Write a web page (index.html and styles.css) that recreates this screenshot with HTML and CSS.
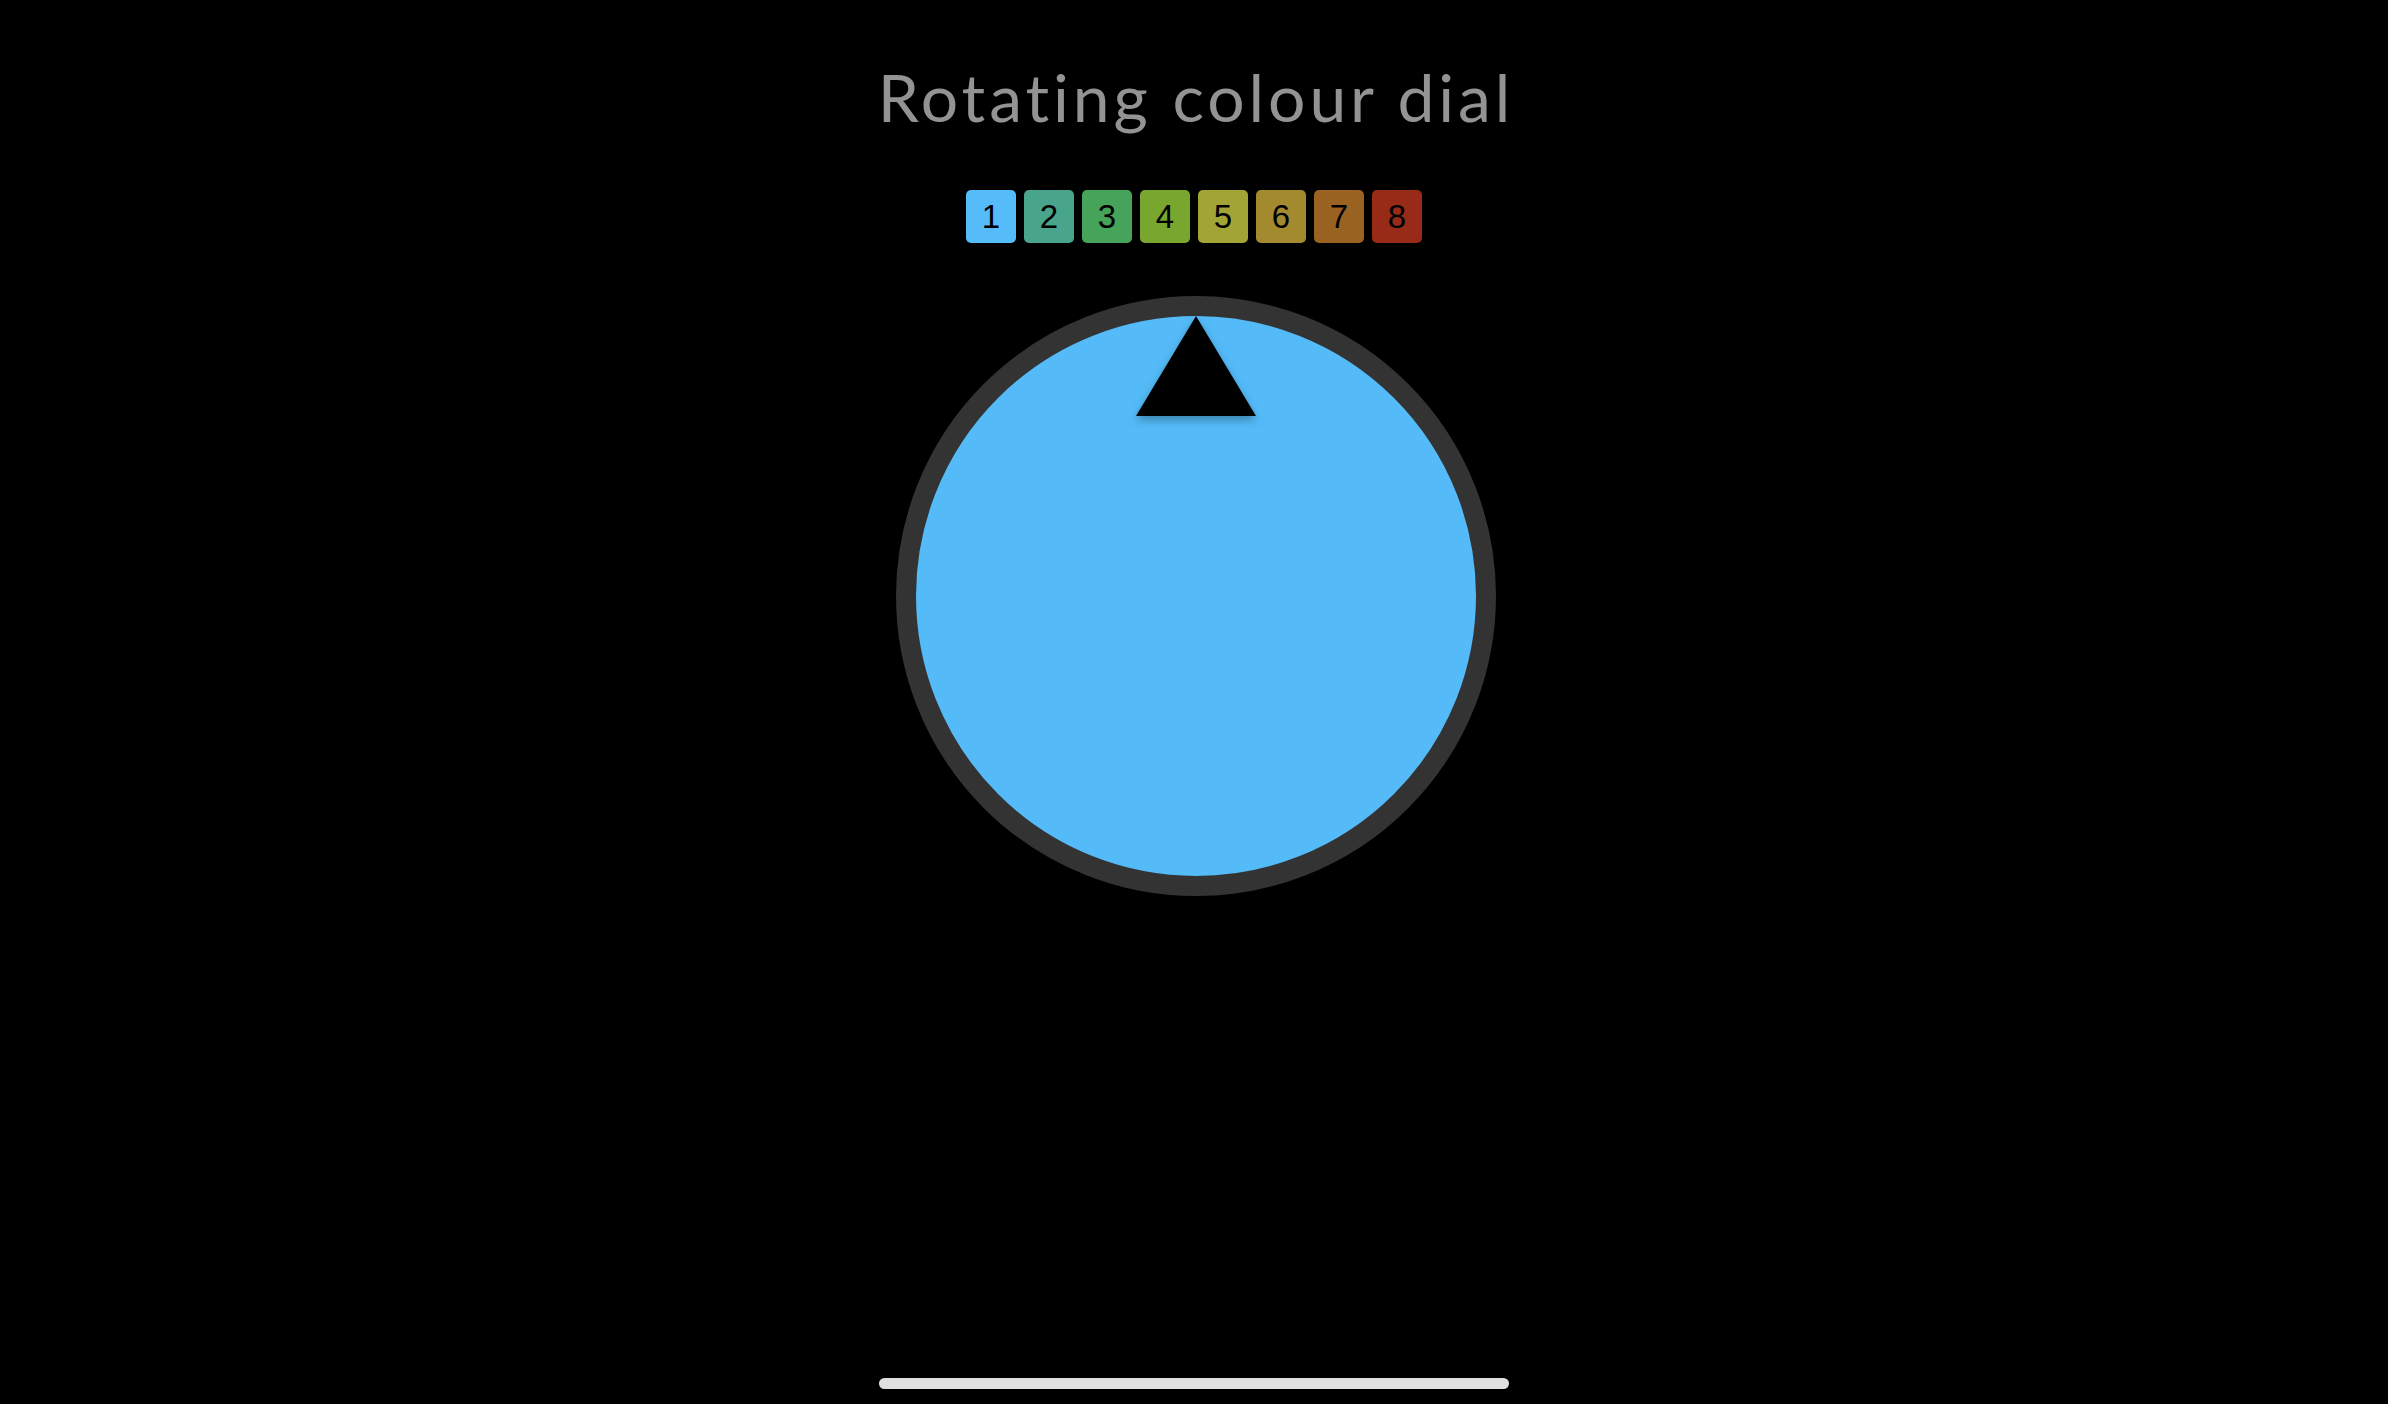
FILE: index.html
```html
<!DOCTYPE html>
<html lang="en">
<head>
<meta charset="utf-8">
<title>Rotating colour dial</title>
<link rel="stylesheet" href="styles.css">
</head>
<body>
<div class="page">
  <h1 class="title">Rotating colour dial</h1>
  <div class="swatches">
    <button class="swatch s1">1</button>
    <button class="swatch s2">2</button>
    <button class="swatch s3">3</button>
    <button class="swatch s4">4</button>
    <button class="swatch s5">5</button>
    <button class="swatch s6">6</button>
    <button class="swatch s7">7</button>
    <button class="swatch s8">8</button>
  </div>
  <div class="dial">
    <svg class="pointer" width="120" height="100" viewBox="0 0 120 100" aria-hidden="true">
      <polygon points="60,0 120,100 0,100" fill="#000"/>
    </svg>
  </div>
  <div class="home-indicator"></div>
</div>
</body>
</html>
```

FILE: styles.css
```css
html, body {
  margin: 0;
  padding: 0;
  background: #000;
}

.page {
  height: 100vh;
  display: flex;
  flex-direction: column;
  align-items: center;
}

.title {
  margin: 0;
  padding-top: 57px;
  font-family: Lato, "Open Sans", sans-serif;
  font-weight: 400;
  font-size: 66px;
  line-height: 80px;
  color: #939393;
  letter-spacing: 3.9px;
  padding-left: 4px;
}

.swatches {
  margin-top: 53px;
  display: flex;
  gap: 8px;
}

.swatch {
  width: 50px;
  height: 53px;
  border: none;
  border-radius: 5px;
  padding: 0;
  font-family: "Liberation Sans", Arial, sans-serif;
  font-size: 33px;
  color: #000;
  display: flex;
  align-items: center;
  justify-content: center;
}

.s1 { background: #55bcf9; }
.s2 { background: #48a48a; }
.s3 { background: #46a35a; }
.s4 { background: #79a62f; }
.s5 { background: #a2a536; }
.s6 { background: #a38a2e; }
.s7 { background: #9a6322; }
.s8 { background: #982a18; }

.dial {
  position: relative;
  margin-top: 53px;
  margin-left: 3px;
  width: 600px;
  height: 600px;
  box-sizing: border-box;
  border: 20px solid #333;
  border-radius: 50%;
  background: #54bbf8;
  display: flex;
  justify-content: center;
}

.pointer {
  display: block;
  filter: drop-shadow(0 4px 4px rgba(0, 0, 0, 0.3));
}

.home-indicator {
  margin-top: auto;
  margin-bottom: 15px;
  width: 630px;
  height: 11px;
  border-radius: 6px;
  background: #e0e0e0;
}
```
